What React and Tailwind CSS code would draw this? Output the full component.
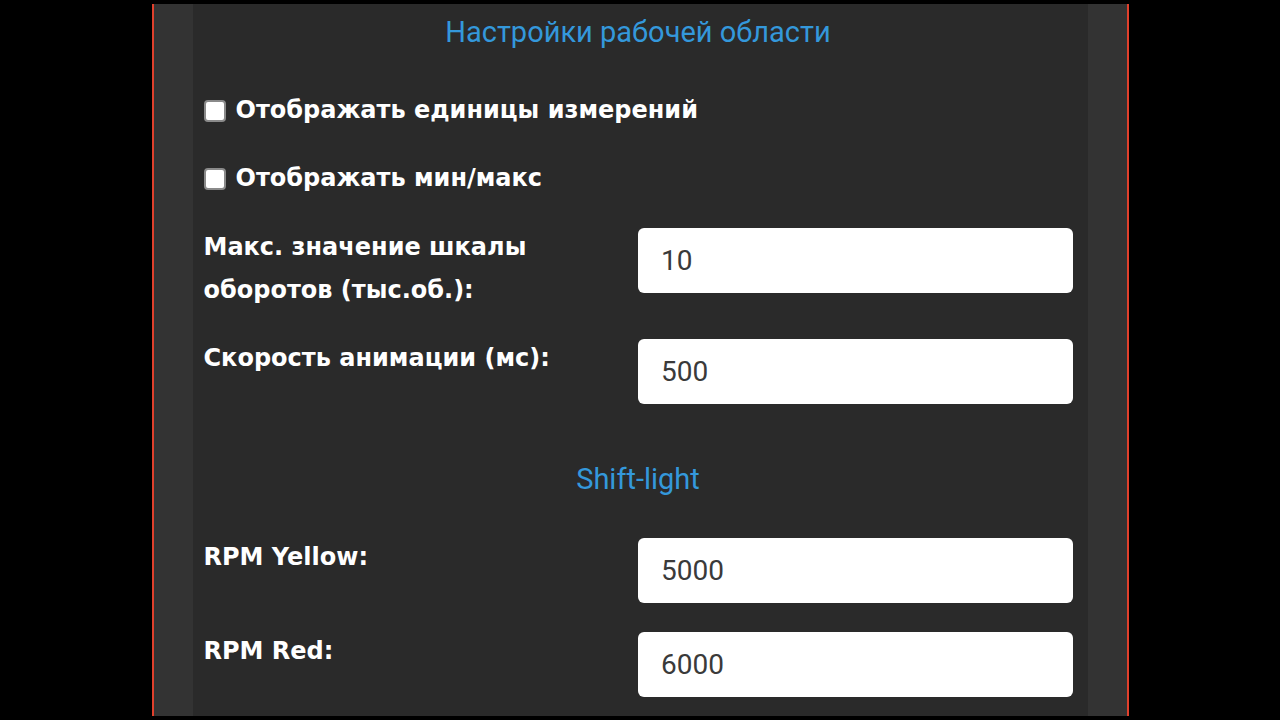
import { useState } from "react";

const font = { fontFamily: "Roboto, 'Noto Sans', sans-serif" };
const labelFont = { fontFamily: "'DejaVu Sans', Verdana, sans-serif" };

const Field = ({ label, value, onChange }) => (
  <div className="grid grid-cols-2 items-start">
    <label className="pr-4 text-[24px] font-bold leading-[43px] text-white" style={labelFont}>
      {label}
    </label>
    <input
      type="text"
      value={value}
      onChange={(e) => onChange(e.target.value)}
      className="mt-[2px] h-[65px] w-full rounded-[6px] bg-white pl-[23px] text-[28px] text-[#3a3a3a] outline-none"
    />
  </div>
);

const Check = ({ label, checked, onChange }) => (
  <label className="flex items-center text-[24px] font-bold leading-[43px] text-white" style={labelFont}>
    <input
      type="checkbox"
      checked={checked}
      onChange={(e) => onChange(e.target.checked)}
      className="m-0 h-[22px] w-[22px] appearance-none rounded-[4px] border-2 border-[#8a8a8a] bg-white checked:bg-[#3498db]"
    />
    <span className="ml-[10px]">{label}</span>
  </label>
);

export default function App() {
  const [units, setUnits] = useState(false); // единицы измерений
  const [minMax, setMinMax] = useState(false); // мин/макс
  const [rpmMax, setRpmMax] = useState("10");
  const [animSpeed, setAnimSpeed] = useState("500");
  const [rpmYellow, setRpmYellow] = useState("5000");
  const [rpmRed, setRpmRed] = useState("6000");

  return (
    <div className="h-[720px] w-[1280px] overflow-hidden bg-black pt-[4px]" style={font}>
      <div className="mx-auto flex h-[712px] w-[977px] border-x-2 border-[#e0402c] bg-[#333]">
        <div className="ml-[39px] w-[895px] bg-[#2a2a2a] pl-[11px] pr-[15px] pt-[8px]">
          <h2 className="text-center text-[29px] leading-[40px] text-[#3498db]">
            Настройки рабочей области
          </h2>

          <div className="mt-[37px] flex flex-col gap-[25px]">
            <Check label="Отображать единицы измерений" checked={units} onChange={setUnits} />
            <Check label="Отображать мин/макс" checked={minMax} onChange={setMinMax} />
          </div>

          <div className="mt-[26px] flex flex-col gap-[25px]">
            <Field
              label="Макс. значение шкалы оборотов (тыс.об.):"
              value={rpmMax}
              onChange={setRpmMax}
            />
            <Field label="Скорость анимации (мс):" value={animSpeed} onChange={setAnimSpeed} />
          </div>

          <h2 className="mt-[55px] text-center text-[29px] leading-[40px] text-[#3498db]">
            Shift-light
          </h2>

          <div className="mt-[37px] flex flex-col gap-[27px]">
            <Field label="RPM Yellow:" value={rpmYellow} onChange={setRpmYellow} />
            <Field label="RPM Red:" value={rpmRed} onChange={setRpmRed} />
            <Field label="" value="" onChange={() => {}} />
          </div>
        </div>
      </div>
    </div>
  );
}
